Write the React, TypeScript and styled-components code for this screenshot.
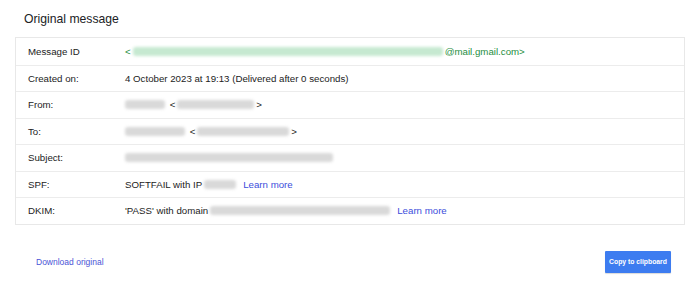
import { createGlobalStyle, styled } from 'styled-components'

const GlobalStyle = createGlobalStyle`
  body {
    margin: 0;
    background: #fff;
    font-family: 'Liberation Sans', Arial, sans-serif;
    color: #222;
  }
`

const Page = styled.div`
  width: 700px;
  height: 290px;
  padding: 11px 15px 0 15px;
  box-sizing: border-box;
`

const Title = styled.h2`
  margin: 0 0 10px 9px;
  font-size: 12.2px;
  font-weight: 400;
  line-height: 16px;
  color: #202124;
`

const Table = styled.div`
  width: 670px;
  border: 1px solid #e8e8e8;
  box-sizing: border-box;
`

const Row = styled.div`
  display: grid;
  grid-template-columns: 97px 1fr;
  align-items: center;
  height: 26.5px;
  padding-left: 12px;
  font-size: 9.7px;
  border-top: 1px solid #ececec;
  box-sizing: border-box;

  &:first-child {
    border-top: none;
  }
`

const Label = styled.span`
  color: #222;
`

const Value = styled.span<{ $green?: boolean }>`
  display: flex;
  align-items: center;
  white-space: nowrap;
  color: ${({ $green }) => ($green ? '#1e8e3e' : '#222')};
`

const Blur = styled.span<{ $w: number; $green?: boolean }>`
  display: inline-block;
  width: ${({ $w }) => $w}px;
  height: 9px;
  margin: 0 2px;
  border-radius: 3px;
  background: ${({ $green }) => ($green ? '#c6e9d1' : '#d9d9d9')};
  filter: blur(1.6px);
`

const Learn = styled.a`
  margin-left: 5px;
  color: #3c4ddb;
  text-decoration: none;
`

const Footer = styled.div`
  display: flex;
  justify-content: space-between;
  align-items: center;
  margin-top: 26px;
  padding: 0 14px 0 21px;
`

const Download = styled.a`
  font-size: 8.5px;
  color: #4a54d6;
  text-decoration: none;
`

const CopyButton = styled.button`
  width: 66px;
  height: 22px;
  padding: 0;
  border: none;
  border-radius: 1px;
  background: #3d7cf0;
  color: #fff;
  font-family: 'Liberation Sans', Arial, sans-serif;
  font-size: 6.8px;
  font-weight: 700;
  box-shadow: 0 1px 1px rgba(0, 0, 0, 0.15);
`

const App = () => {
  return (
    <>
      <GlobalStyle />
      <Page>
        <Title>Original message</Title>
        <Table>
          <Row>
            <Label>Message ID</Label>
            <Value $green>
              &lt;
              <Blur $w={310} $green />
              @mail.gmail.com&gt;
            </Value>
          </Row>
          <Row>
            <Label>Created on:</Label>
            <Value>4 October 2023 at 19:13 (Delivered after 0 seconds)</Value>
          </Row>
          <Row>
            <Label>From:</Label>
            <Value>
              <Blur $w={40} style={{ marginLeft: 0 }} />
              &nbsp;&lt;
              <Blur $w={77} />
              &gt;
            </Value>
          </Row>
          <Row>
            <Label>To:</Label>
            <Value>
              <Blur $w={60} style={{ marginLeft: 0 }} />
              &nbsp;&lt;
              <Blur $w={92} />
              &gt;
            </Value>
          </Row>
          <Row>
            <Label>Subject:</Label>
            <Value>
              <Blur $w={208} style={{ marginLeft: 0 }} />
            </Value>
          </Row>
          <Row>
            <Label>SPF:</Label>
            <Value>
              SOFTFAIL with IP
              <Blur $w={32} />
              <Learn href="#">Learn more</Learn>
            </Value>
          </Row>
          <Row>
            <Label>DKIM:</Label>
            <Value>
              'PASS' with domain
              <Blur $w={180} />
              <Learn href="#">Learn more</Learn>
            </Value>
          </Row>
        </Table>
        <Footer>
          <Download href="#">Download original</Download>
          <CopyButton>Copy to clipboard</CopyButton>
        </Footer>
      </Page>
    </>
  )
}

export default App
